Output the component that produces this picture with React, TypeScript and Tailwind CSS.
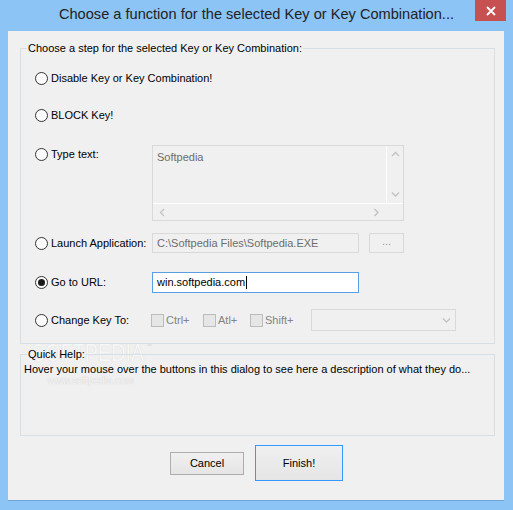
import React from "react";

function Radio({ checked }: { checked?: boolean }) {
  return (
    <span className="flex h-[13px] w-[13px] shrink-0 items-center justify-center rounded-full border border-[#333] bg-[#fbfbfb]">
      {checked && <span className="h-[7px] w-[7px] rounded-full bg-[#1a1a1a]" />}
    </span>
  );
}

function Check({ label, width }: { label: string; width: string }) {
  return (
    <span className={`flex shrink-0 items-center ${width}`}>
      <span className="h-[13px] w-[13px] border border-[#bcbcbc] bg-[#e6e6e6]" />
      <span className="ml-[2px] text-[#838383]">{label}</span>
    </span>
  );
}

function Chevron({ dir }: { dir: "up" | "down" | "left" | "right" }) {
  const d = {
    up: "M1 5 L4.5 1.5 L8 5",
    down: "M1 1.5 L4.5 5 L8 1.5",
    left: "M5 1 L1.5 4.5 L5 8",
    right: "M1.5 1 L5 4.5 L1.5 8",
  }[dir];
  const vertical = dir === "up" || dir === "down";
  return (
    <svg width={vertical ? 9 : 7} height={vertical ? 7 : 9} viewBox={vertical ? "0 0 9 7" : "0 0 7 9"}>
      <path d={d} fill="none" stroke="#c2c2c2" strokeWidth="1.3" />
    </svg>
  );
}

function Label({ text, checked }: { text: string; checked?: boolean }) {
  return (
    <div className="flex w-[117px] shrink-0 items-center">
      <Radio checked={checked} />
      <span className="ml-[3px] whitespace-nowrap">{text}</span>
    </div>
  );
}

export default function App() {
  return (
    <div className="relative flex h-[510px] w-[513px] flex-col bg-[#8cc4f5] font-['Liberation_Sans',Arial,sans-serif] text-[11px] text-black">
      <div className="relative flex h-[31px] shrink-0 items-center justify-center">
        <span className="pb-[1px] text-[14.6px] text-[#222]">Choose a function for the selected Key or Key Combination...</span>
        <button className="absolute right-[7px] top-0 flex h-[21px] w-[31px] items-center justify-center bg-[#c75050]" type="button">
          <svg width="10" height="10" viewBox="0 0 10 10">
            <path d="M1 1 L9 9 M9 1 L1 9" stroke="#fff" strokeWidth="1.8" />
          </svg>
        </button>
      </div>

      <div className="relative ml-[8px] mr-[9px] flex h-[470px] flex-col border-b border-[#6fa6d8] bg-[#f0f0f0]">
        {/* watermark, behind the dialog content */}
        <div className="pointer-events-none absolute left-[24px] top-[311px] z-0 origin-left scale-x-[0.86] text-[23px] leading-none text-[#f7f7f7] [text-shadow:0_0_1px_#cdcdcd]">
          SOFTPEDIA<span className="ml-[2px] align-top text-[7px] text-[#d4d4d4] [text-shadow:none]">™</span>
        </div>
        <div className="pointer-events-none absolute left-[40px] top-[345px] z-0 text-[10px] leading-none text-[#f7f7f7] [text-shadow:0_0_1px_#bdbdbd]">www.softpedia.com</div>

        <fieldset className="relative z-[1] ml-[12px] mt-[11px] w-[475px] border border-[#d5dfe5] pb-[12px]">
          <legend className="ml-[6px] px-[1px] leading-[13px]">Choose a step for the selected Key or Key Combination:</legend>
          <div className="flex flex-col pl-[14px]">
            <div className="mt-[13px] flex h-[20px] items-center">
              <Label text="Disable Key or Key Combination!" />
            </div>
            <div className="mt-[17px] flex h-[20px] items-center">
              <Label text="BLOCK Key!" />
            </div>
            <div className="mt-[20px] flex items-start">
              <div className="mt-[1px]">
                <Label text="Type text:" />
              </div>
              <div className="flex h-[76px] w-[252px] flex-col border border-[#d9d9d9]">
                <div className="flex min-h-0 flex-1">
                  <div className="flex-1 px-[4px] pt-[3px] text-[#6d6d6d]">Softpedia</div>
                  <div className="flex w-[17px] flex-col items-center justify-between border-l border-white py-[5px]">
                    <Chevron dir="up" />
                    <Chevron dir="down" />
                  </div>
                </div>
                <div className="flex h-[17px] border-t border-white">
                  <div className="flex flex-1 items-center justify-between px-[6px]">
                    <Chevron dir="left" />
                    <Chevron dir="right" />
                  </div>
                  <div className="w-[17px] bg-[#f0f0f0]" />
                </div>
              </div>
            </div>
            <div className="mt-[12px] flex h-[20px] items-center">
              <Label text="Launch Application:" />
              <div className="flex h-[20px] w-[207px] items-center border border-[#d9d9d9] px-[4px] text-[#6d6d6d]">C:\Softpedia Files\Softpedia.EXE</div>
              <div className="ml-[10px] flex h-[20px] w-[35px] items-center justify-center border border-[#d9d9d9] pb-[3px] text-[#9a9a9a]">...</div>
            </div>
            <div className="mt-[19px] flex h-[21px] items-center">
              <Label text="Go to URL:" checked />
              <div className="flex h-[21px] w-[207px] items-center border border-[#5a9fe6] bg-white px-[4px]">
                win.softpedia.com<span className="ml-[1px] h-[13px] w-[1px] bg-black" />
              </div>
            </div>
            <div className="mt-[16px] flex h-[22px] items-center">
              <div className="w-[116px] shrink-0">
                <Label text="Change Key To:" />
              </div>
              <Check label="Ctrl+" width="w-[52px]" />
              <Check label="Atl+" width="w-[47px]" />
              <Check label="Shift+" width="w-[61px]" />
              <div className="flex h-[22px] w-[145px] items-center justify-end border border-[#d9d9d9] pr-[4px]">
                <Chevron dir="down" />
              </div>
            </div>
          </div>
        </fieldset>

        <fieldset className="relative z-[1] ml-[12px] mt-[4px] w-[475px] border border-[#d5dfe5]">
          <legend className="ml-[6px] px-[1px] leading-[13px]">Quick Help:</legend>
          <div className="h-[74px] pl-[3px] pt-[2px] leading-[13px]">
            Hover your mouse over the buttons in this dialog to see here a description of what they do...
          </div>
        </fieldset>

        <div className="relative z-[1] ml-[162px] mt-[9px] flex items-center gap-[11px]">
          <button className="flex h-[23px] w-[74px] items-center justify-center border border-[#adadad] bg-[linear-gradient(#f0f0f0,#e5e5e5)]" type="button">Cancel</button>
          <button className="flex h-[36px] w-[88px] items-center justify-center border border-[#3399ff] bg-[linear-gradient(#f0f0f0,#e5e5e5)]" type="button">Finish!</button>
        </div>
      </div>
    </div>
  );
}
